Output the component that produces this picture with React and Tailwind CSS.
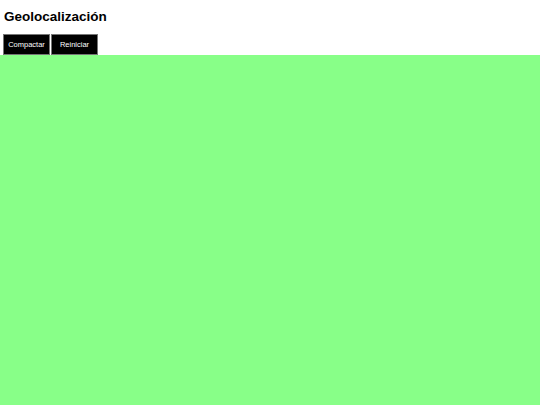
import React from 'react';

const App = () => {
  return (
    <div className="w-[540px] h-[405px] bg-white overflow-hidden font-['Liberation_Sans',Arial,sans-serif]">
      <h2 className="pt-[9px] pl-[4px] h-[34px] text-[13.5px] leading-[16px] font-bold text-black">
        Geolocalización
      </h2>
      <div className="flex gap-[1px] pl-[3px] h-[21px]">
        <button className="w-[47px] h-[21px] bg-black text-white text-[7.5px] border border-[#767676]">
          Compactar
        </button>
        <button className="w-[47px] h-[21px] bg-black text-white text-[7.5px] border border-[#767676]">
          Reiniciar
        </button>
      </div>
      <div className="h-[350px] w-full bg-[#88ff88]"></div>
    </div>
  );
};

export default App;
